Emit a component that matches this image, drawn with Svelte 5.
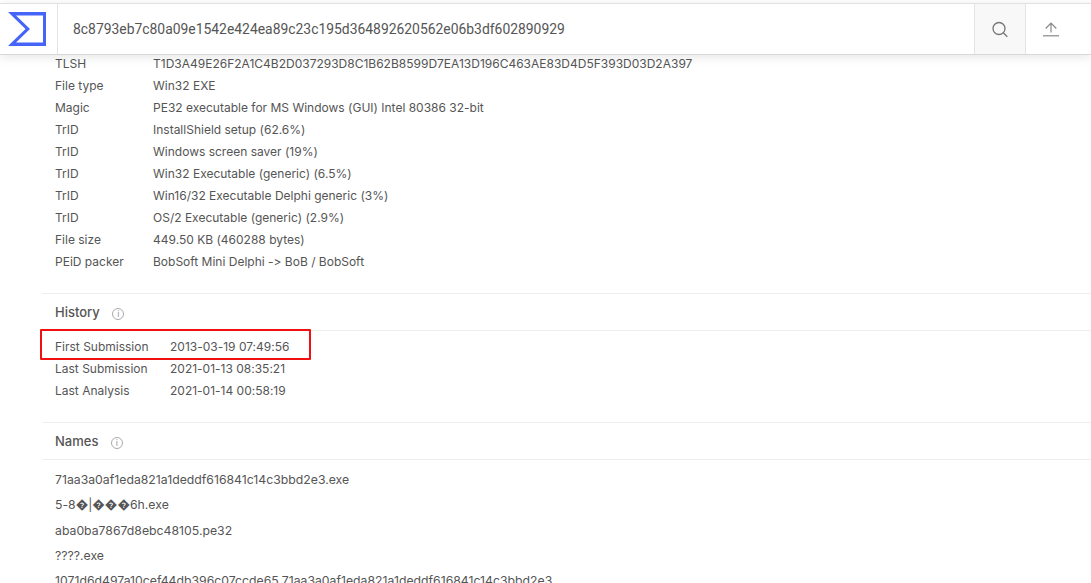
<script>
  const props = [
    ['TLSH', 'T1D3A49E26F2A1C4B2D037293D8C1B62B8599D7EA13D196C463AE83D4D5F393D03D2A397'],
    ['File type', 'Win32 EXE'],
    ['Magic', 'PE32 executable for MS Windows (GUI) Intel 80386 32-bit'],
    ['TrID', 'InstallShield setup (62.6%)'],
    ['TrID', 'Windows screen saver (19%)'],
    ['TrID', 'Win32 Executable (generic) (6.5%)'],
    ['TrID', 'Win16/32 Executable Delphi generic (3%)'],
    ['TrID', 'OS/2 Executable (generic) (2.9%)'],
    ['File size', '449.50 KB (460288 bytes)'],
    ['PEiD packer', 'BobSoft Mini Delphi -> BoB / BobSoft']
  ];
  const history = [
    ['First Submission', '2013-03-19 07:49:56'],
    ['Last Submission', '2021-01-13 08:35:21'],
    ['Last Analysis', '2021-01-14 00:58:19']
  ];
  const names = [
    '71aa3a0af1eda821a1deddf616841c14c3bbd2e3.exe',
    '5-8\uFFFD|\uFFFD\uFFFD\uFFFD6h.exe',
    'aba0ba7867d8ebc48105.pe32',
    '????.exe',
    '1071d6d497a10cef44db396c07ccde65.71aa3a0af1eda821a1deddf616841c14c3bbd2e3'
  ];
</script>

<div class="page">
  <header class="topbar">
    <a class="logo" href="#top" aria-label="home">
      <svg width="38" height="34" viewBox="0 0 38 34">
        <path d="M0 0H38V34H0L17.5 17Z M8 3.5L22 17L8 30.5H35V3.5Z" fill="#4565f8" fill-rule="evenodd" />
      </svg>
    </a>
    <div class="hash">8c8793eb7c80a09e1542e424ea89c23c195d364892620562e06b3df602890929</div>
    <button class="tool search" aria-label="search">
      <svg width="18" height="18" viewBox="0 0 18 18" fill="none" stroke="#777" stroke-width="1.3">
        <circle cx="8" cy="8.5" r="6" />
        <path d="M12.3 12.8L16.3 16.8" />
      </svg>
    </button>
    <button class="tool" aria-label="upload">
      <svg width="18" height="18" viewBox="0 0 18 18" fill="none" stroke="#888" stroke-width="1.2">
        <path d="M9 12.5V3.2M3.7 8.5L9 3.2L14.3 8.5" />
        <path d="M1 15.8H17" />
      </svg>
    </button>
  </header>

  <main class="content">
    <section class="props">
      {#each props as [k, v]}
        <div class="row"><span class="key">{k}</span><span>{v}</span></div>
      {/each}
    </section>

    <section class="block">
      <h3>History <span class="info">i</span></h3>
      <div class="rows history">
        {#each history as [k, v]}
          <div class="row"><span class="key">{k}</span><span>{v}</span></div>
        {/each}
        <div class="mark"></div>
      </div>
    </section>

    <section class="block names">
      <h3>Names <span class="info">i</span></h3>
      <div class="name-list">
        {#each names as n}
          <div>{n}</div>
        {/each}
      </div>
    </section>
  </main>
</div>

<style>
  :global(body) {
    margin: 0;
    background: #fff;
  }

  .page {
    position: relative;
    width: 1091px;
    height: 583px;
    overflow: hidden;
    font-family: Inter, Roboto, sans-serif;
    font-size: 12px;
    font-feature-settings: "calt" 0;
    color: #555;
  }

  .topbar {
    position: absolute;
    top: 3px;
    left: 0;
    right: 0;
    height: 50px;
    display: flex;
    align-items: stretch;
    padding-right: 15px;
    background: #fff;
    border-top: 1px solid #e2e2e2;
    border-bottom: 1px solid #d8d8d8;
    box-shadow: 0 2px 10px rgba(0, 0, 0, 0.1);
    z-index: 2;
  }

  .logo {
    width: 58px;
    flex: none;
    box-sizing: border-box;
    border-right: 1px solid #e4e4e4;
    display: flex;
    align-items: center;
    padding-left: 8px;
  }

  .hash {
    flex: 1;
    display: flex;
    align-items: center;
    padding-left: 15px;
    font-family: Roboto, sans-serif;
    font-size: 13.9px;
    color: #555;
  }

  .tool {
    width: 51px;
    padding: 0;
    border: 0;
    border-left: 1px solid #e4e4e4;
    background: #fff;
    display: flex;
    align-items: center;
    justify-content: center;
  }

  .tool.search {
    background: #f8f8f8;
  }

  .content {
    padding-top: 53px;
  }

  .props {
    margin-left: 42px;
    padding: 0 0 20px 13px;
    border-bottom: 1px solid #eee;
  }

  .row {
    display: flex;
    height: 22px;
    line-height: 22px;
    white-space: nowrap;
  }

  .props .key {
    width: 98px;
  }

  .block {
    margin-left: 42px;
    border-bottom: 1px solid #eee;
  }

  h3 {
    margin: 0;
    height: 36px;
    line-height: 37px;
    padding-left: 13px;
    font-size: 13px;
    font-weight: 500;
    color: #555;
    border-bottom: 1px solid #eee;
  }

  .info {
    display: inline-block;
    box-sizing: border-box;
    width: 12px;
    height: 12px;
    margin-left: 9px;
    border: 1px solid #aaa;
    border-radius: 50%;
    font-size: 9px;
    font-weight: 400;
    line-height: 10px;
    text-align: center;
    color: #999;
  }

  .rows {
    position: relative;
    padding: 5px 0 20px 13px;
  }

  .history .key {
    width: 115px;
  }

  .mark {
    position: absolute;
    left: -2px;
    top: -2px;
    width: 267px;
    height: 27px;
    border: 2px solid #f01010;
    border-radius: 1px;
  }

  .names {
    border-bottom: 0;
  }

  .name-list {
    padding: 7px 0 0 13px;
    font-size: 12.25px;
    white-space: nowrap;
  }

  .name-list div {
    height: 25.3px;
    line-height: 25.3px;
  }
</style>
